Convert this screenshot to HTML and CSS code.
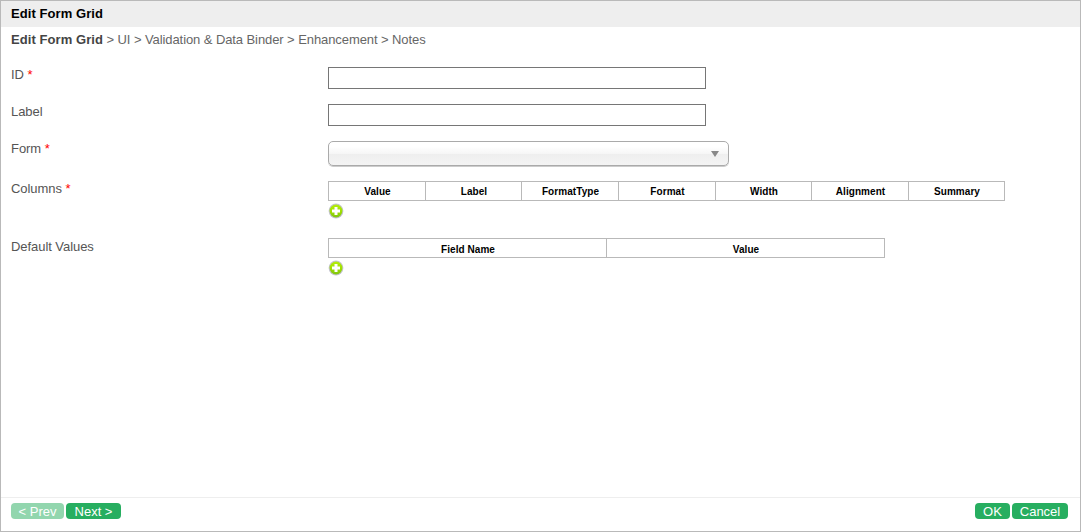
FILE: index.html
```html
<!DOCTYPE html>
<html lang="en">
<head>
<meta charset="utf-8">
<title>Edit Form Grid</title>
<link rel="stylesheet" href="styles.css">
</head>
<body>
<svg class="defs" width="0" height="0" aria-hidden="true">
  <defs>
    <linearGradient id="green" x1="0" y1="0" x2="0" y2="1">
      <stop offset="0" stop-color="#b4ee0c"/>
      <stop offset=".5" stop-color="#a0e000"/>
      <stop offset="1" stop-color="#80c410"/>
    </linearGradient>
    <symbol id="add" viewBox="0 0 16 16">
      <circle cx="8" cy="8" r="7.4" fill="#c4c4d0"/>
      <circle cx="8" cy="8" r="6.4" fill="url(#green)"/>
      <path d="M6.500 4h3v2.500H12v3H9.500V12h-3V9.500H4v-3h2.500z" fill="#fff"/>
    </symbol>
  </defs>
</svg>
<div class="dialog">
  <header class="title">Edit Form Grid</header>
  <nav class="steps"><b>Edit Form Grid</b> &gt; <span>UI</span> &gt; <span>Validation &amp; Data Binder</span> &gt; <span>Enhancement</span> &gt; <span>Notes</span></nav>
  <main class="form">
    <div class="row row-text">
      <label class="label" for="id">ID <span class="required">*</span></label>
      <input class="input" id="id" type="text">
    </div>
    <div class="row row-text">
      <label class="label" for="label">Label</label>
      <input class="input" id="label" type="text">
    </div>
    <div class="row row-select">
      <div class="label">Form <span class="required">*</span></div>
      <div class="select"><svg width="8" height="6" viewBox="0 0 8 6"><path d="M0 0h8L4 6z" fill="#888"/></svg></div>
    </div>
    <div class="row row-grid">
      <div class="label">Columns <span class="required">*</span></div>
      <div>
        <div class="grid grid-columns">
          <div class="cell">Value</div><div class="cell">Label</div><div class="cell">FormatType</div><div class="cell">Format</div><div class="cell">Width</div><div class="cell">Alignment</div><div class="cell">Summary</div>
        </div>
        <svg class="add" width="16" height="16"><use href="#add"/></svg>
      </div>
    </div>
    <div class="row row-grid">
      <div class="label label-low">Default Values</div>
      <div>
        <div class="grid grid-defaults">
          <div class="cell cell-low">Field Name</div><div class="cell cell-low">Value</div>
        </div>
        <svg class="add" width="16" height="16"><use href="#add"/></svg>
      </div>
    </div>
  </main>
  <footer class="footer">
    <div class="buttons">
      <button class="button prev" disabled>&lt; Prev</button>
      <button class="button next">Next &gt;</button>
    </div>
    <div class="buttons">
      <button class="button ok">OK</button>
      <button class="button cancel">Cancel</button>
    </div>
  </footer>
</div>
</body>
</html>
```
FILE: styles.css
```css
* { box-sizing: border-box; }
body {
  margin: 0;
  background: #fff;
  color: #555;
  font: 13px/16px "Liberation Sans", Arial, sans-serif;
}
.defs { position: absolute; }
.dialog {
  display: flex;
  flex-direction: column;
  height: 532px;
  border: 1px solid #b9b9b9;
}
.title {
  height: 26px;
  padding: 5px 10px;
  background: #eee;
  color: #000;
  font-weight: bold;
  letter-spacing: .07px;
}
.steps {
  height: 40px;
  padding: 5px 10px;
  color: #666;
  letter-spacing: -.085px;
  white-space: nowrap;
}
.steps b { color: #444; letter-spacing: .07px; }
.form { flex: 1; padding-left: 10px; }
.row { display: grid; grid-template-columns: 317px 1fr; }
.row-text { height: 37px; }
.row-select { height: 40px; }
.row-grid { height: 57px; }
.required { color: #f00; }
.input {
  width: 378px;
  height: 22px;
  border: 1px solid #767676;
  background: #fff;
}
.label { letter-spacing: -.06px; white-space: nowrap; }
.label-low { padding-top: 1px; }
.select {
  display: flex;
  align-items: center;
  justify-content: flex-end;
  width: 401px;
  height: 25px;
  padding-right: 9px;
  border: 1px solid #aaa;
  border-radius: 5px;
  background: linear-gradient(#fff 20%, #f6f6f6 50%, #eee 52%, #f4f4f4 100%);
  box-shadow: 0 1px 0 #ccc;
}
.grid { display: grid; height: 20px; border: 1px solid #b9b9b9; }
.grid-columns { width: 677px; grid-template-columns: 97px 96px 97px 97px 96px 97px 95px; }
.grid-defaults { width: 557px; grid-template-columns: 278px 277px; }
.cell {
  height: 18px;
  border-right: 1px solid #b9b9b9;
  color: #000;
  font-size: 10px;
  line-height: 19px;
  font-weight: bold;
  letter-spacing: .06px;
  text-align: center;
  text-indent: 1px;
}
.cell:last-child { border-right: 0; }
.cell-low { line-height: 21px; }
.add { display: block; margin-top: 2px; }
.footer {
  display: flex;
  justify-content: space-between;
  height: 34px;
  padding: 5px 12px 0 10px;
  border-top: 1px solid #eee;
}
.buttons { display: flex; gap: 2px; }
.button {
  height: 16px;
  padding: 1px 0 0;
  border: 0;
  border-radius: 4px;
  background: #27ae60;
  color: #fff;
  font: 13px/15px "Liberation Sans", Arial, sans-serif;
}
.button:disabled { opacity: .5; }
.prev { width: 53px; }
.next { width: 55px; }
.ok { width: 35px; }
.cancel { width: 56px; }
```
